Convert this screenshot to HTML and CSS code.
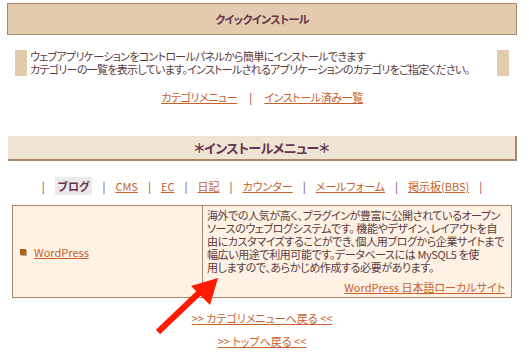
FILE: index.html
```html
<!DOCTYPE html>
<html lang="ja">
<head>
<meta charset="utf-8">
<link rel="stylesheet" href="styles.css">
</head>
<body>
<div class="page">
  <div class="head1">クイックインストール</div>
  <div class="desc">
    <span class="bar"></span>
    <p class="desc-text">ウェブアプリケーションをコントロールパネルから簡単にインストールできます<br>カテゴリーの一覧を表示しています。インストールされるアプリケーションのカテゴリをご指定ください。</p>
    <span class="bar"></span>
  </div>
  <div class="links">
    <a href="#">カテゴリメニュー</a><span class="sep">|</span><a href="#">インストール済み一覧</a>
  </div>
  <div class="head2">＊インストールメニュー＊</div>
  <div class="tabs">
    <span class="sep">|</span><span class="current">ブログ</span><span class="sep">|</span><a href="#">CMS</a><span class="sep">|</span><a href="#">EC</a><span class="sep">|</span><a href="#">日記</a><span class="sep">|</span><a href="#">カウンター</a><span class="sep">|</span><a href="#">メールフォーム</a><span class="sep">|</span><a href="#">掲示板(BBS)</a><span class="sep">|</span>
  </div>
  <div class="table">
    <div class="cell-name"><span class="bullet"></span><a href="#">WordPress</a></div>
    <div class="cell-info">
      <p class="info-text">海外での人気が高く、プラグインが豊富に公開されているオープン<br>ソースのウェブログシステムです。 機能やデザイン、レイアウトを自<br>由にカスタマイズすることができ、個人用ブログから企業サイトまで<br>幅広い用途で利用可能です。データベースには MySQL5 を使<br>用しますので、あらかじめ作成する必要があります。</p>
      <a class="site" href="#">WordPress 日本語ローカルサイト</a>
    </div>
  </div>
  <div class="back"><a href="#">&gt;&gt; カテゴリメニューへ戻る &lt;&lt;</a></div>
  <div class="back"><a href="#">&gt;&gt; トップへ戻る &lt;&lt;</a></div>
  <svg class="arrow" width="529" height="358" viewBox="0 0 529 358">
    <line x1="158" y1="332" x2="202" y2="290" stroke="#ff1a00" stroke-width="6"/>
    <polygon points="218,278 191,286 210,305" fill="#ff1a00"/>
  </svg>
</div>
</body>
</html>
```
FILE: styles.css
```css
* { box-sizing: border-box; }
body {
  margin: 0;
  font-family: "Noto Sans CJK JP", "Noto Sans", sans-serif;
  font-size: 11px;
  color: #5c3a3e;
  background: #fff;
  font-feature-settings: "palt";
}
a { color: #c8602c; text-decoration: underline; }
p { margin: 0; }
.page { position: relative; width: 529px; height: 358px; padding: 3px 12px 0 7px; }
.head1 {
  height: 32px;
  width: 510px;
  border: 1px solid #a8876a;
  background: #e3ccae;
  color: #66334d;
  font-weight: bold;
  font-size: 11px;
  letter-spacing: -0.6px;
  text-align: center;
  line-height: 30px;
}
.desc {
  display: flex;
  align-items: stretch;
  margin: 15px 0 0 8px;
  width: 494px;
  height: 26px;
}
.bar { width: 12px; background: #e3ccae; flex: none; }
.desc-text { flex: 1; padding-left: 3px; line-height: 13px; white-space: nowrap; letter-spacing: -0.7px; }
.links {
  display: flex;
  justify-content: center;
  gap: 12px;
  margin-top: 14px;
  width: 510px;
  line-height: 14px;
  letter-spacing: -0.4px;
}
.sep { color: #7a4044; letter-spacing: 0; }
.head2 {
  margin-top: 32px;
  margin-left: 1px;
  width: 509px;
  height: 25px;
  background: #efe3d4;
  border-right: 2px solid #a8876a;
  border-bottom: 2px solid #a8876a;
  color: #66334d;
  font-weight: bold;
  font-size: 13px;
  letter-spacing: -0.5px;
  text-align: center;
  line-height: 23px;
}
.tabs {
  display: flex;
  justify-content: center;
  align-items: center;
  gap: 10px;
  margin-top: 16px;
  width: 510px;
  height: 18px;
}
.current {
  background: #ebebeb;
  font-weight: bold;
  padding: 2px 3px;
  line-height: 14px;
  color: #66334d;
}
.table {
  display: grid;
  grid-template-columns: 190px 1fr;
  margin: 10px 0 0 5px;
  width: 500px;
  height: 93px;
  border: 1px solid #a8876a;
  background: #fdf2e4;
}
.cell-name {
  display: flex;
  align-items: center;
  gap: 8px;
  padding-left: 7px;
  border-right: 1px solid #a8876a;
}
.bullet {
  width: 6px; height: 6px;
  background: #b0600e;
  box-shadow: 1px 1px 0 #b8b0a8;
}
.cell-info {
  display: flex;
  flex-direction: column;
  padding: 3px 6px 3px 4px;
}
.info-text { line-height: 13px; flex: 1; white-space: nowrap; letter-spacing: -0.4px; }
.site { align-self: flex-end; line-height: 14px; }
.back { width: 510px; text-align: center; line-height: 14px; }
.table + .back { margin-top: 13px; }
.back + .back { margin-top: 9px; }
.arrow { position: absolute; left: 0; top: 0; pointer-events: none; }
```
